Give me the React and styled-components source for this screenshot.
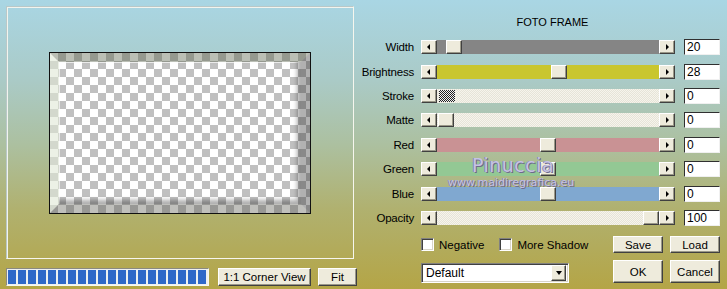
import React from "react";
import styled, { createGlobalStyle } from "styled-components";

const GlobalStyle = createGlobalStyle`
  html, body {
    margin: 0;
    padding: 0;
  }
  body {
    width: 727px;
    height: 289px;
    overflow: hidden;
    font-family: "Liberation Sans", Arial, sans-serif;
    font-size: 11px;
    color: #000;
  }
`;

const Dialog = styled.div`
  position: relative;
  display: flex;
  width: 727px;
  height: 289px;
  background: linear-gradient(
    180deg,
    #a9d6e4 0%,
    #aacac6 28%,
    #acc0a0 50%,
    #b0b170 72%,
    #b4a546 100%
  );
`;

const LeftPane = styled.div`
  width: 354px;
  padding: 6px 0 0 6px;
`;

const Preview = styled.div`
  box-sizing: border-box;
  width: 348px;
  height: 253px;
  display: flex;
  align-items: center;
  justify-content: center;
  border: 1px solid;
  border-color: #b9c8c8 #f6f6ee #f6f6ee #b9c8c8;
  box-shadow: inset 1px 1px 0 #f2f4ee;
`;

const Photo = styled.div`
  box-sizing: border-box;
  width: 262px;
  height: 162px;
  border: 1px solid #111;
  background-color: #fff;
  background-image: repeating-conic-gradient(#c0c0c0 0 25%, #fff 0 50%);
  background-size: 16px 16px;
`;

const FrameBand = styled.div`
  box-sizing: border-box;
  height: 100%;
  border: 9px solid;
  border-color: rgba(85, 95, 70, 0.4) rgba(50, 50, 50, 0.38)
    rgba(90, 90, 80, 0.38) rgba(225, 232, 215, 0.6);
`;

const FrameInner = styled.div`
  height: 100%;
  box-shadow: inset -4px -4px 4px rgba(0, 0, 0, 0.32),
    inset 1px 1px 0 rgba(255, 255, 255, 0.7);
`;

const BottomBar = styled.div`
  display: flex;
  align-items: center;
  margin-top: 9px;
  height: 18px;
`;

const Progress = styled.div`
  box-sizing: border-box;
  width: 203px;
  height: 18px;
  display: flex;
  gap: 2px;
  padding: 1px;
  border: 1px solid;
  border-color: #8a8a80 #f8f8f0 #f8f8f0 #8a8a80;
  background: #eef0f0;
`;

const Block = styled.div`
  flex: 0 0 8px;
  background: #2f68c8;
`;

const Button = styled.button`
  box-sizing: border-box;
  width: ${(p) => p.$w}px;
  height: ${(p) => p.$h || 18}px;
  margin-left: ${(p) => p.$ml || 0}px;
  padding: 0;
  font-family: "Liberation Sans", Arial, sans-serif;
  font-size: 11.5px;
  color: #000;
  background: #eeebdc;
  border: 1px solid;
  border-color: #fff #404040 #404040 #fff;
  box-shadow: inset -1px -1px 0 #9a9888;
`;

const RightPane = styled.div`
  flex: 1;
  display: flex;
  flex-direction: column;
`;

const Title = styled.div`
  margin: 16px 0 6px 61px;
  width: 263px;
  height: 13px;
  line-height: 13px;
  text-align: center;
`;

const Row = styled.div`
  display: flex;
  align-items: center;
  height: 24.4px;
`;

const Label = styled.div`
  width: 54px;
  margin-right: 7px;
  text-align: right;
  font-size: 11.5px;
  letter-spacing: -0.2px;
`;

const Scrollbar = styled.div`
  display: flex;
  width: 254px;
  height: 14px;
`;

const ArrowButton = styled.div`
  box-sizing: border-box;
  flex: 0 0 16px;
  height: 14px;
  display: flex;
  align-items: center;
  justify-content: center;
  background: #eeebdc;
  border: 1px solid;
  border-color: #fff #404040 #404040 #fff;
  box-shadow: inset -1px -1px 0 #9a9888;

  &::after {
    content: "";
    width: 0;
    height: 0;
    border-top: 3px solid transparent;
    border-bottom: 3px solid transparent;
    ${(p) =>
      p.$dir === "left"
        ? "border-right: 3px solid #000; margin-left: -1px;"
        : "border-left: 3px solid #000; margin-left: 1px;"}
  }
`;

const lightTrack = `
  background-color: #f4f2e8;
  background-image: repeating-conic-gradient(#e6e4d8 0 25%, #f6f4ec 0 50%);
  background-size: 2px 2px;
`;

const Track = styled.div`
  flex: 1;
  display: flex;
  ${(p) => (p.$color ? `background: ${p.$color};` : lightTrack)}
`;

const Thumb = styled.div`
  box-sizing: border-box;
  width: 16px;
  height: 14px;
  margin-left: ${(p) => p.$pos}px;
  background: #eeebdc;
  border: 1px solid;
  border-color: #fff #404040 #404040 #fff;
  box-shadow: inset -1px -1px 0 #9a9888;
`;

const DitherThumb = styled.div`
  width: 16px;
  height: 12px;
  margin: 1px 0 0 ${(p) => p.$pos}px;
  background-image: repeating-conic-gradient(#222 0 25%, #f0f0f0 0 50%);
  background-size: 2px 2px;
`;

const ValueBox = styled.div`
  box-sizing: border-box;
  width: 36px;
  height: 16px;
  margin-left: 9px;
  padding-left: 2px;
  line-height: 14px;
  font-size: 12px;
  background: #fff;
  border: 1px solid;
  border-color: #303030 #f0f0f0 #f0f0f0 #303030;
`;

const Footer = styled.div`
  display: flex;
  margin-top: 6px;
  padding-left: 61px;
`;

const FooterLeft = styled.div`
  width: 192px;
  display: flex;
  flex-direction: column;
`;

const CheckRow = styled.div`
  display: flex;
  align-items: center;
  height: 17px;
  font-size: 11.5px;
`;

const CheckBox = styled.span`
  box-sizing: border-box;
  width: 13px;
  height: 13px;
  margin-left: ${(p) => p.$ml || 0}px;
  background: #fff;
  border: 1px solid;
  border-color: #808080 #fff #fff #808080;
  box-shadow: inset 1px 1px 0 #404040, inset -1px -1px 0 #d8d4c8;
`;

const CheckText = styled.span`
  margin-left: 5px;
`;

const Select = styled.div`
  box-sizing: border-box;
  display: flex;
  align-items: center;
  justify-content: space-between;
  width: 148px;
  height: 20px;
  margin-top: 10px;
  padding: 2px;
  background: #fff;
  border: 1px solid;
  border-color: #808080 #fff #fff #808080;
  box-shadow: inset 1px 1px 0 #404040, inset -1px -1px 0 #d8d4c8;
  font-size: 12px;
`;

const SelectText = styled.span`
  padding-left: 2px;
`;

const SelectArrow = styled.span`
  box-sizing: border-box;
  width: 15px;
  height: 16px;
  display: flex;
  align-items: center;
  justify-content: center;
  background: #eeebdc;
  border: 1px solid;
  border-color: #fff #404040 #404040 #fff;
  box-shadow: inset -1px -1px 0 #9a9888;

  &::after {
    content: "";
    border-left: 3.5px solid transparent;
    border-right: 3.5px solid transparent;
    border-top: 4px solid #000;
  }
`;

const ButtonGrid = styled.div`
  display: grid;
  grid-template-columns: 50px 50px;
  grid-template-rows: 17px 23px;
  column-gap: 7px;
  row-gap: 7px;
`;

const Watermark = styled.div`
  position: absolute;
  left: 448px;
  top: 154px;
  width: 122px;
  text-align: center;
  color: #c6c3e4;
  text-shadow: 1px 1px 0 #6c6a8c, -1px 0 0 #8a88a8;
  pointer-events: none;
`;

const WatermarkName = styled.div`
  font-family: "DejaVu Sans", sans-serif;
  font-size: 19px;
  line-height: 22px;
  letter-spacing: 0.5px;
  padding-left: 8px;
`;

const WatermarkUrl = styled.div`
  font-family: "DejaVu Sans", sans-serif;
  font-size: 11px;
  line-height: 13px;
`;

const sliders = [
  { label: "Width", value: "20", color: "#858585", pos: 9 },
  { label: "Brightness", value: "28", color: "#c9c62e", pos: 114 },
  { label: "Stroke", value: "0", pos: 2, dither: true },
  { label: "Matte", value: "0", pos: 1 },
  { label: "Red", value: "0", color: "#c99294", pos: 103 },
  { label: "Green", value: "0", color: "#93c894", pos: 103 },
  { label: "Blue", value: "0", color: "#80a8d0", pos: 103 },
  { label: "Opacity", value: "100", pos: 206 },
];

export default function App() {
  return (
    <Dialog>
      <GlobalStyle />
      <LeftPane>
        <Preview>
          <Photo>
            <FrameBand>
              <FrameInner />
            </FrameBand>
          </Photo>
        </Preview>
        <BottomBar>
          <Progress>
            {Array.from({ length: 20 }).map((_, i) => (
              <Block key={i} />
            ))}
          </Progress>
          <Button $w={93} $ml={9}>
            1:1 Corner View
          </Button>
          <Button $w={39} $ml={7}>
            Fit
          </Button>
        </BottomBar>
      </LeftPane>

      <RightPane>
        <Title>FOTO FRAME</Title>
        {sliders.map((s) => (
          <Row key={s.label}>
            <Label>{s.label}</Label>
            <Scrollbar>
              <ArrowButton $dir="left" />
              <Track $color={s.color}>
                {s.dither ? <DitherThumb $pos={s.pos} /> : <Thumb $pos={s.pos} />}
              </Track>
              <ArrowButton $dir="right" />
            </Scrollbar>
            <ValueBox>{s.value}</ValueBox>
          </Row>
        ))}
        <Footer>
          <FooterLeft>
            <CheckRow>
              <CheckBox />
              <CheckText>Negative</CheckText>
              <CheckBox $ml={15} />
              <CheckText>More Shadow</CheckText>
            </CheckRow>
            <Select>
              <SelectText>Default</SelectText>
              <SelectArrow />
            </Select>
          </FooterLeft>
          <ButtonGrid>
            <Button $w={50} $h={17}>Save</Button>
            <Button $w={50} $h={17}>Load</Button>
            <Button $w={50} $h={23}>OK</Button>
            <Button $w={50} $h={23}>Cancel</Button>
          </ButtonGrid>
        </Footer>
      </RightPane>

      <Watermark>
        <WatermarkName>Pinuccia</WatermarkName>
        <WatermarkUrl>www.maidiregrafica.eu</WatermarkUrl>
      </Watermark>
    </Dialog>
  );
}
